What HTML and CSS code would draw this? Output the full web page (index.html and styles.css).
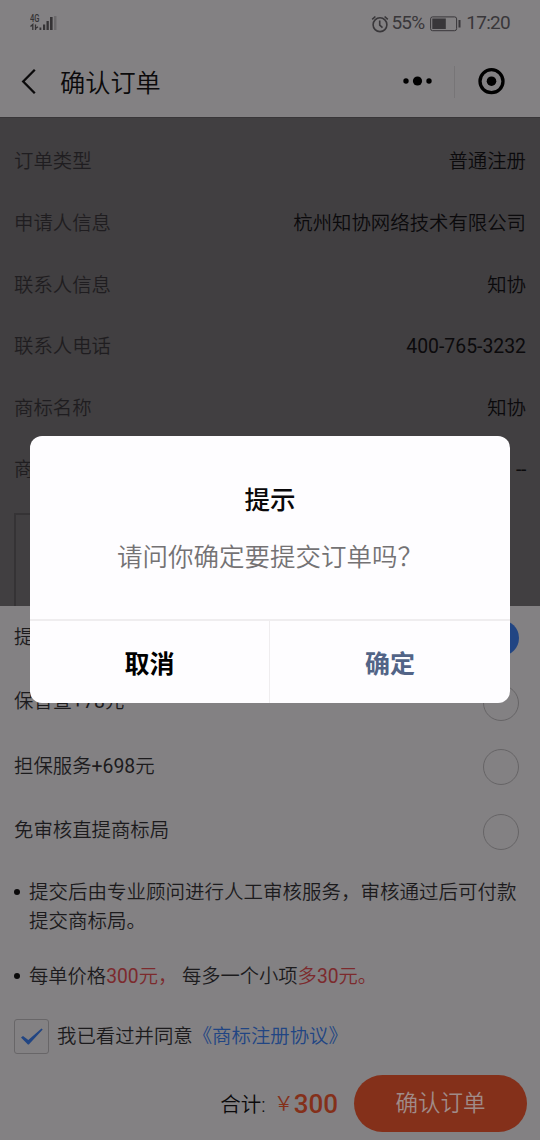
FILE: index.html
```html
<!DOCTYPE html>
<html lang="zh-CN">
<head>
<meta charset="utf-8">
<title>确认订单</title>
<link rel="stylesheet" href="styles.css">
</head>
<body>
<div class="screen">
  <header class="status">
    <svg class="signal" width="30" height="20" viewBox="0 0 30 20">
      <text class="net" x="0" y="8.500" textLength="9.500" lengthAdjust="spacingAndGlyphs">4G</text>
      <path d="M2.800 17v-5.500l-2.300 2M5.500 11.500V17M5.500 15.500l2.500-1.800" fill="none" stroke="#353335" stroke-width="1.300"/>
      <path d="M9.500 14.500h1.800V17H9.500zM13 11.500h2.200V17H13zM16.500 8h2.300v9h-2.300zM20 4h2.600v13H20z" fill="#353335"/>
      <path d="M24 3h2.500v14H24z" fill="#6c6a6c"/>
    </svg>
    <div class="status-right">
      <svg width="18" height="18" viewBox="0 0 18 18" fill="none" stroke="#39373a" stroke-width="1.600">
        <circle cx="9" cy="9.700" r="6.900"/><path d="M8.700 5.500v4.600l2.800 2.500M1.200 4.400l3.200-2.900M16.800 4.400l-3.200-2.900"/>
      </svg>
      <span class="percent">55%</span>
      <svg class="battery" width="31" height="16" viewBox="0 0 31 16">
        <rect x=".6" y=".9" width="26" height="13.800" rx="2" fill="none" stroke="#39373a"/>
        <path d="M2.300 2.600h13.500V13H2.300zM28.500 4h2v7.500h-2z" fill="#39373a"/>
      </svg>
      <span class="clock">17:20</span>
    </div>
  </header>
  <nav class="nav">
    <svg width="16" height="28" viewBox="0 0 16 28"><path d="M13.800 1.800 2.200 13.500l11.600 11.700" fill="none" stroke="#0b0a0b" stroke-width="2.300"/></svg>
    <h1 class="title">确认订单</h1>
    <div class="capsule">
      <svg class="dots" width="30" height="12" viewBox="0 0 30 12"><circle cx="3" cy="5" r="2.700"/><circle cx="14.500" cy="5" r="4.600"/><circle cx="26" cy="5" r="2.700"/></svg>
      <i class="divider"></i>
      <svg width="28" height="28" viewBox="0 0 28 28"><circle cx="13.500" cy="13.200" r="11.500" fill="none" stroke="#000" stroke-width="3.300"/><circle cx="13.500" cy="13.200" r="4.800"/></svg>
    </div>
  </nav>
  <section class="details">
    <div class="row"><span>订单类型</span><b>普通注册</b></div>
    <div class="row"><span>申请人信息</span><b>杭州知协网络技术有限公司</b></div>
    <div class="row"><span>联系人信息</span><b>知协</b></div>
    <div class="row"><span>联系人电话</span><b class="digits">400-765-3232</b></div>
    <div class="row"><span>商标名称</span><b>知协</b></div>
    <div class="row"><span>商</span><b class="digits empty">--</b></div>
    <div class="picture"></div>
  </section>
  <section class="options">
    <div class="option"><span>提</span><i class="radio checked"></i></div>
    <div class="option"><span>保普查<span class="digits">+78</span>元</span><i class="radio"></i></div>
    <div class="option"><span>担保服务<span class="digits">+698</span>元</span><i class="radio"></i></div>
    <div class="option"><span>免审核直提商标局</span><i class="radio"></i></div>
  </section>
  <ul class="notes">
    <li>提交后由专业顾问进行人工审核服务，审核通过后可付款提交商标局。</li>
    <li class="pricing">每单价格<em><span class="digits">300</span>元，</em> 每多一个小项<em>多<span class="digits">30</span>元。</em></li>
  </ul>
  <div class="agree">
    <span class="checkbox"><svg width="24" height="20" viewBox="0 0 24 20"><path d="M1 10.500 3 9l5.300 4L21.500 1.500l1.200.9L8.800 17.500h-.9z" fill="#214583"/></svg></span>
    <span class="agree-text">我已看过并同意<a class="link">《商标注册协议》</a></span>
  </div>
  <footer class="footer">
    <span class="total">合计:</span><span class="yen">￥</span><strong class="price">300</strong>
    <button class="submit">确认订单</button>
  </footer>
  <div class="dialog">
    <h2 class="dialog-title">提示</h2>
    <p class="dialog-text">请问你确定要提交订单吗？</p>
    <div class="actions"><button class="cancel">取消</button><button class="confirm">确定</button></div>
  </div>
</div>
</body>
</html>
```
FILE: styles.css
```css
* { box-sizing: border-box; }
body { margin: 0; background: #838183; }
.screen {
  position: relative;
  display: flex;
  flex-direction: column;
  width: 540px;
  height: 1140px;
  overflow: hidden;
  background: #838183;
  color: #1c1b1d;
  font: 350 19.4px/28.8px Roboto, "Noto Sans CJK SC", sans-serif;
}
svg { display: block; flex: none; }
i, em { font-style: normal; }
button { margin: 0; padding: 0; border: 0; background: none; font: inherit; }
.status { display: flex; height: 46px; padding: 13px 30px 0; justify-content: space-between; align-items: flex-start; }
.net { font: 500 10px Roboto, sans-serif; fill: #353335; }
.status-right { display: flex; height: 21px; align-items: center; color: #39373a; font-size: 19px; font-weight: 400; }
.percent { margin-left: 3px; letter-spacing: -.9px; }
.battery { margin-left: 6px; }
.clock { margin-left: 5px; letter-spacing: -.7px; }
.nav { display: flex; height: 71px; padding-left: 21px; align-items: center; }
.title { margin: 4px 0 0 23px; color: #0b0a0b; font-size: 25.2px; font-weight: 350; line-height: 36px; }
.capsule { display: flex; width: 110px; height: 48px; margin-left: auto; margin-right: 28px; align-items: center; }
.dots { margin-left: 1px; }
.divider { width: 1px; height: 32px; margin: 0 23px 0 21px; background: #777577; }
.details { height: 489px; padding: 14px 14px 0; background: #413f41; color: #1f1d20; border-top: 1px solid #383638; overflow: hidden; }
.row { display: flex; height: 61.6px; align-items: center; justify-content: space-between; }
.row b { color: #0b0a0c; font-weight: 350; }
.row .digits, .digits { font-weight: 400; }
.row .empty { letter-spacing: -.3px; }
.picture { height: 120px; width: 180px; margin-top: 11px; border: 2px solid #353335; }
.options { padding: 0 21px 0 14px; }
.option { display: flex; height: 64.5px; align-items: center; justify-content: space-between; }
.radio { width: 36px; height: 36px; border: 1.5px solid #666466; border-radius: 50%; }
.radio.checked { border: 0; background: #214583; }
.notes { margin: 15px 14px 0; padding: 0; list-style: none; }
.notes li { position: relative; padding-left: 15px; margin-bottom: 26.5px; font-size: 19.5px; }
.notes .pricing { font-size: 19.3px; }
.notes li::before { content: ""; position: absolute; left: 0; top: 10px; width: 6px; height: 6px; border-radius: 50%; background: #0b0a0b; }
.notes em { color: #7c2a2d; }
.agree { display: flex; margin: 1px 14px 0; align-items: center; gap: 8px; }
.agree-text { padding-top: 1px; }
.checkbox { display: flex; width: 35px; height: 35px; align-items: center; justify-content: center; border: 1.500px solid #686668; border-radius: 3px; }
.link { color: #214583; }
.footer { display: flex; height: 58px; margin: 20px 13px 0 0; align-items: center; justify-content: flex-end; }
.total { margin: 4px 8px 0 0; color: #0b0a0b; font-size: 20.500px; }
.yen { margin-top: 3px; color: #84301a; font-size: 20px; }
.price { margin: 2px 16px 0 0; color: #84301a; font-size: 26px; font-weight: 500; }
.submit { width: 173px; height: 57px; border-radius: 29px; background: #84301a; color: #a08b88; font-size: 22.500px; }
.dialog { position: absolute; left: 30px; top: 436px; width: 480px; height: 267px; border-radius: 12px; background: #fefdff; overflow: hidden; text-align: center; }
.dialog-title { margin: 46px 0 0; color: #090809; font-size: 25.500px; font-weight: 500; line-height: 36px; }
.dialog-text { margin: 21px 0 0; color: #747274; font-size: 25.500px; line-height: 36px; }
.actions { display: grid; grid-template-columns: 1fr 1fr; height: 84px; margin-top: 44px; border-top: 2px solid #efedef; }
.actions button { padding-top: 6px; font-size: 25px; font-weight: 700; }
.cancel { color: #000; border-right: 1px solid #efedef; }
.confirm { color: #526487; }
```
